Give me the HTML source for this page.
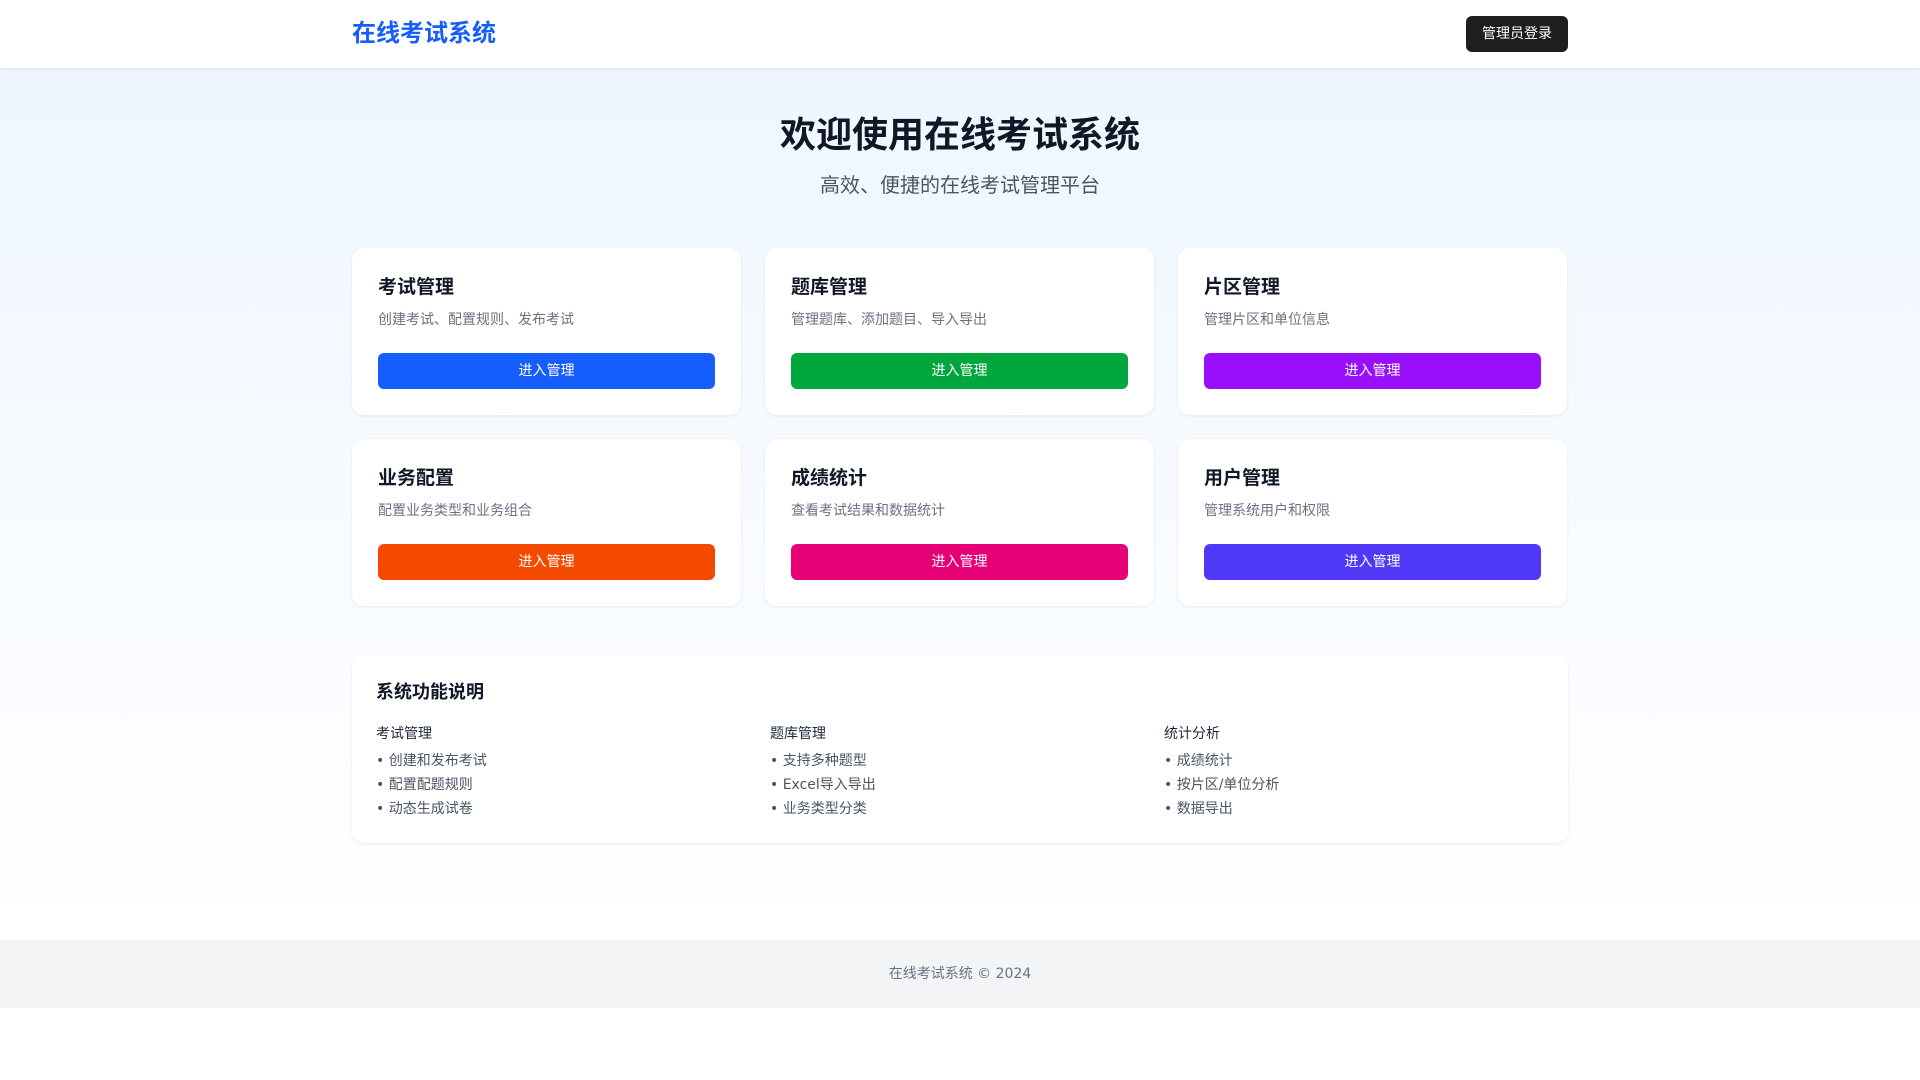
<!DOCTYPE html>
<html><head><meta charset="utf-8"><style>
*{box-sizing:border-box;margin:0;padding:0}
body{width:1920px;height:1080px;font-family:"DejaVu Sans","Noto Sans CJK SC",sans-serif;background:#fff;color:#101828}
header{height:68px;background:#fff;box-shadow:0 1px 3px rgba(0,0,0,.1);position:relative;z-index:2}
.wrap{width:1216px;margin:0 auto;position:relative}
.logo{position:absolute;left:0;top:16px;font-size:24px;font-weight:bold;color:#155dfc;line-height:34px}
.login{position:absolute;right:0;top:16px;height:36px;width:102px;background:#1e1e1e;color:#fff;border-radius:6px;font-size:14px;line-height:36px;text-align:center}
main{height:872px;background:linear-gradient(#eff6ff,#fff);padding-top:1px}
h1{text-align:center;font-size:36px;font-weight:bold;margin-top:42px;line-height:50px}
.sub{text-align:center;font-size:20px;color:#4a5565;margin-top:10px;line-height:28px}
.grid{display:grid;grid-template-columns:repeat(3,389px);gap:24px 24px;margin-top:49px}
.card{background:#fff;border-radius:12px;box-shadow:0 1px 3px rgba(0,0,0,.08);height:167px;padding:25px 26px 0}
.card h3{font-size:19px;line-height:28px;font-weight:bold}
.card p{font-size:14px;color:#6a7282;line-height:20px;margin-top:9px}
.btn{margin-top:23px;height:36px;border-radius:6px;color:#fff;font-size:14px;line-height:36px;text-align:center}
.info{margin-top:49px;background:#fff;border-radius:12px;box-shadow:0 1px 3px rgba(0,0,0,.08);height:188px;padding:25px 24px}
.info h2{font-size:18px;font-weight:bold;line-height:26px}
.cols{display:flex;margin-top:18px}
.col{width:394px;flex-shrink:0}
.col h4{font-size:14px;font-weight:normal;color:#1e2939;line-height:20px;margin-bottom:5px}
.col li{list-style:none;font-size:14px;color:#4a5565;line-height:24px}
footer{height:68px;background:#f3f4f6;text-align:center;font-size:14px;color:#6a7282;line-height:68px}
</style></head><body>
<header><div class="wrap"><div class="logo">在线考试系统</div><div class="login">管理员登录</div></div></header>
<main><div class="wrap">
<h1>欢迎使用在线考试系统</h1>
<div class="sub">高效、便捷的在线考试管理平台</div>
<div class="grid">
<div class="card"><h3>考试管理</h3><p>创建考试、配置规则、发布考试</p><div class="btn" style="background:#155dfc">进入管理</div></div>
<div class="card"><h3>题库管理</h3><p>管理题库、添加题目、导入导出</p><div class="btn" style="background:#00a63e">进入管理</div></div>
<div class="card"><h3>片区管理</h3><p>管理片区和单位信息</p><div class="btn" style="background:#9810fa">进入管理</div></div>
<div class="card"><h3>业务配置</h3><p>配置业务类型和业务组合</p><div class="btn" style="background:#f54900">进入管理</div></div>
<div class="card"><h3>成绩统计</h3><p>查看考试结果和数据统计</p><div class="btn" style="background:#e60076">进入管理</div></div>
<div class="card"><h3>用户管理</h3><p>管理系统用户和权限</p><div class="btn" style="background:#4f39f6">进入管理</div></div>
</div>
<div class="info"><h2>系统功能说明</h2>
<div class="cols">
<div class="col"><h4>考试管理</h4><ul><li>• 创建和发布考试</li><li>• 配置配题规则</li><li>• 动态生成试卷</li></ul></div>
<div class="col"><h4>题库管理</h4><ul><li>• 支持多种题型</li><li>• Excel导入导出</li><li>• 业务类型分类</li></ul></div>
<div class="col"><h4>统计分析</h4><ul><li>• 成绩统计</li><li>• 按片区/单位分析</li><li>• 数据导出</li></ul></div>
</div></div>
</div></main>
<footer>在线考试系统 © 2024</footer>
</body></html>
